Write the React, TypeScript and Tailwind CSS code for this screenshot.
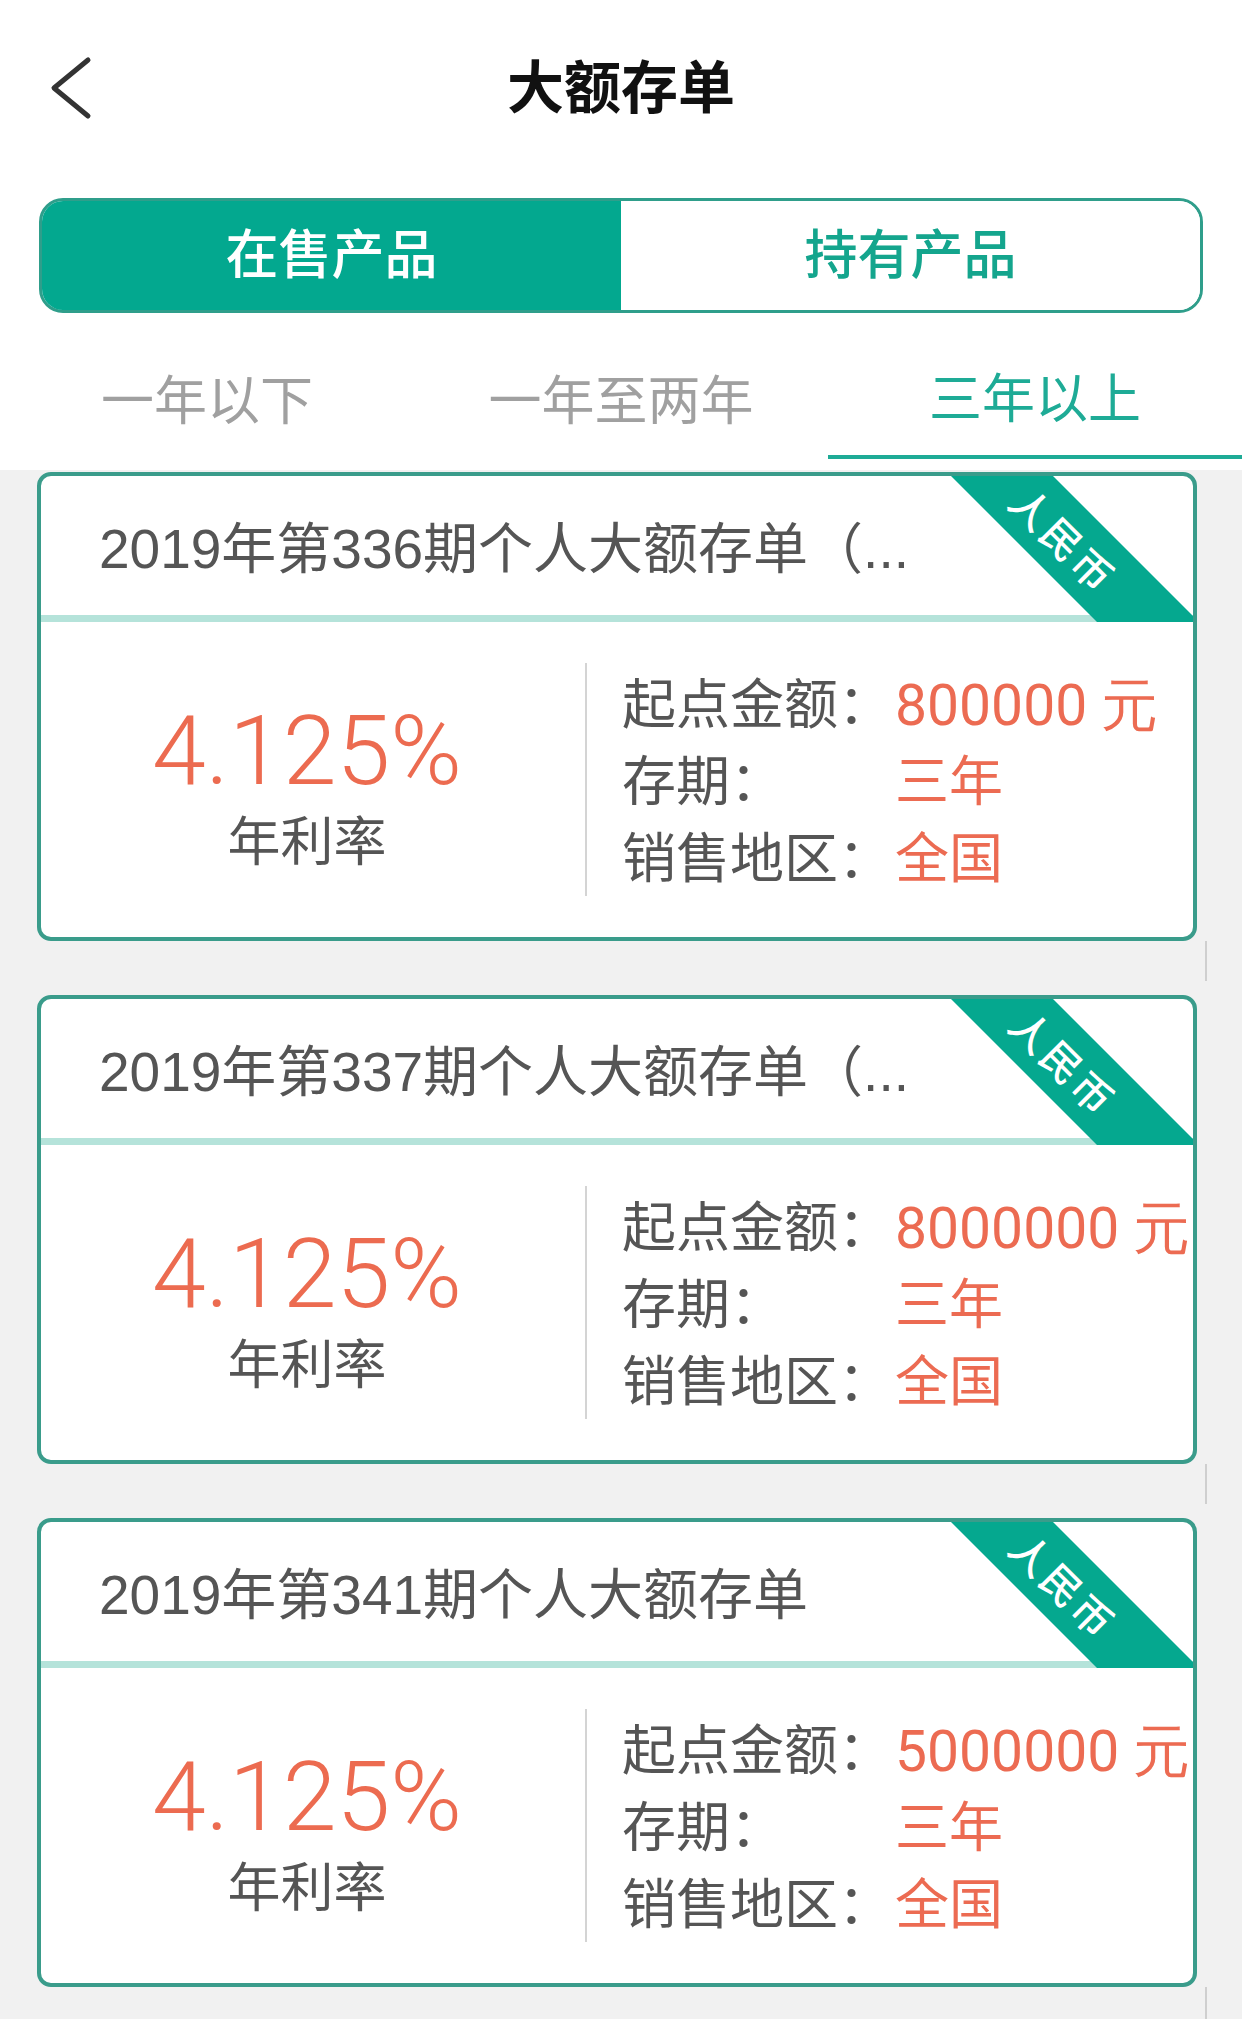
import React from "react"

type Product = {
  id: number
  title: string
  rate: string
  minAmount: string
  term: string
  region: string
}

const products: Product[] = [
  { id: 336, title: "2019年第336期个人大额存单（...", rate: "4.125%", minAmount: "800000 元", term: "三年", region: "全国" },
  { id: 337, title: "2019年第337期个人大额存单（...", rate: "4.125%", minAmount: "8000000 元", term: "三年", region: "全国" },
  { id: 341, title: "2019年第341期个人大额存单", rate: "4.125%", minAmount: "5000000 元", term: "三年", region: "全国" },
]

const tabs = ["一年以下", "一年至两年", "三年以上"]

function Ribbon() {
  return (
    <svg
      className="absolute right-0 top-0"
      width="250"
      height="146"
      viewBox="0 0 250 146"
    >
      <polygon points="8,0 110,0 250,140 250,146 154,146" fill="#05a88f" />
      <text
        x="121"
        y="63"
        transform="rotate(45 121 63)"
        textAnchor="middle"
        dominantBaseline="central"
        fontSize="40"
        fontWeight="500"
        letterSpacing="3"
        fill="#ffffff"
        fontFamily='"Noto Sans CJK SC", sans-serif'
      >
        人民币
      </text>
    </svg>
  )
}

function ProductCard({ product }: { product: Product }) {
  return (
    <div className="relative ml-[37px] h-[469px] w-[1160px] overflow-hidden rounded-[14px] border-4 border-[#3a9c8b] bg-white">
      <div className="flex h-[139px] items-center pl-[58px] pt-2 text-[55px] leading-none text-[#555555] whitespace-nowrap">
        {product.title}
      </div>
      <div className="h-[7px] bg-[#b5e3da]" />
      <div className="flex h-[315px]">
        <div className="w-[544px] pr-3 pt-[81px] text-center">
          <div className="font-['Roboto'] text-[97px] font-light leading-[96px] text-[#ec6b50]">
            {product.rate}
          </div>
          <div className="mt-[17px] text-[53px] leading-[53px] text-[#555555]">
            年利率
          </div>
        </div>
        <div className="h-[233px] w-[2px] self-center bg-[#d4d4d4]" />
        <div className="pl-[35px] pt-[45px] text-[54px] leading-[77px]">
          <div className="flex whitespace-nowrap">
            <span className="w-[273px] text-[#555555]">起点金额：</span>
            <span className="font-['Roboto'] text-[57px] text-[#ec6b52]">{product.minAmount}</span>
          </div>
          <div className="flex whitespace-nowrap">
            <span className="w-[273px] text-[#555555]">存期：</span>
            <span className="text-[#ec6b52]">{product.term}</span>
          </div>
          <div className="flex whitespace-nowrap">
            <span className="w-[273px] text-[#555555]">销售地区：</span>
            <span className="text-[#ec6b52]">{product.region}</span>
          </div>
        </div>
      </div>
      <Ribbon />
    </div>
  )
}

export default function App() {
  return (
    <div className="min-h-[2019px] w-[1242px] bg-[#f1f1f1] font-['Liberation_Sans','Noto_Sans_CJK_SC',sans-serif]">
      <div className="bg-white pb-[11px]">
        <div className="relative flex h-[176px] items-center justify-center">
          <svg
            className="absolute left-[48px] top-[56px]"
            width="46"
            height="64"
            viewBox="0 0 46 64"
          >
            <polyline
              points="40,4 6,32 40,60"
              fill="none"
              stroke="#333333"
              strokeWidth="5"
              strokeLinecap="round"
              strokeLinejoin="round"
            />
          </svg>
          <h1 className="text-[57px] font-bold leading-none text-[#111111]">大额存单</h1>
        </div>

        <div className="mx-[39px] mt-[22px] grid h-[115px] grid-cols-2 overflow-hidden rounded-[24px] border-[3px] border-[#2f9e8b]">
          <div className="flex items-center justify-center bg-[#03a88f] text-[53px] font-medium text-white">
            在售产品
          </div>
          <div className="flex items-center justify-center bg-white text-[53px] font-medium text-[#14a58d]">
            持有产品
          </div>
        </div>

        <div className="mt-[28px] grid grid-cols-3">
          {tabs.map((tab, i) => (
            <div
              key={tab}
              className={
                i === 2
                  ? "flex h-[118px] items-center justify-center border-b-4 border-[#1eab96] pt-1 text-[53px] text-[#1eab96]"
                  : "flex h-[118px] items-center justify-center pt-1 text-[53px] text-[#a0a0a0]"
              }
            >
              {tab}
            </div>
          ))}
        </div>
      </div>

      <div className="pt-[2px]">
        {products.map((p) => (
          <div key={p.id}>
            <ProductCard product={p} />
            <div className="flex h-[54px] justify-end pr-[35px]">
              <div className="h-[40px] w-[2px] bg-[#cfcfcf]" />
            </div>
          </div>
        ))}
      </div>
    </div>
  )
}
